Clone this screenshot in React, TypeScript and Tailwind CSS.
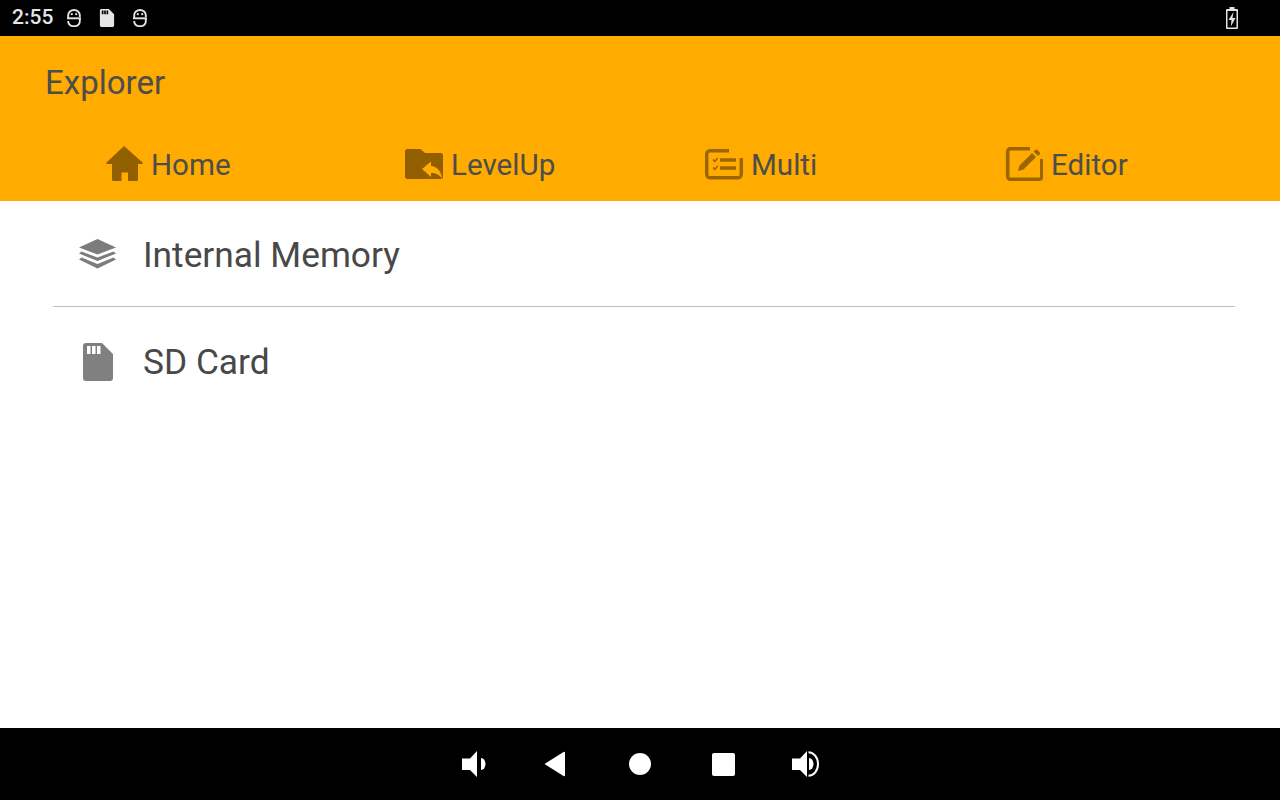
const tabIcon = "h-[38px] w-[38px] shrink-0";

function AdbIcon() {
  return (
    <svg viewBox="0 0 16 18" className="h-[18px] w-4 text-[#e4e4e4]" fill="none" stroke="currentColor" strokeWidth="1.9">
      <path d="M2.200 9V6.200a5.800 5.200 0 0 1 11.600 0V8" />
      <path d="M1 9.300h14" />
      <path d="M13.800 9.500v3a5.800 4.800 0 0 1-11.600 0V12" />
      <circle cx="5.800" cy="5.200" r="1.100" fill="currentColor" stroke="none" />
      <circle cx="10.200" cy="5.200" r="1.100" fill="currentColor" stroke="none" />
    </svg>
  );
}

function SdIcon({ className }: { className: string }) {
  return (
    <svg viewBox="0 0 30 38" className={className}>
      <path
        fillRule="evenodd"
        fill="currentColor"
        d="M3 0h16L30 11v24a3 3 0 0 1-3 3H3a3 3 0 0 1-3-3V3a3 3 0 0 1 3-3zM4 3v8h3.500V3zM9 3v8h3.500V3zM14 3v8h3.500V3z"
      />
    </svg>
  );
}

function VolumeDown() {
  return (
    <svg viewBox="0 0 26 26" className="h-[26px] w-[26px]">
      <path fill="currentColor" d="M1 7.500h8L16 0v26l-7-7H1z" />
      <path fill="currentColor" d="M20 7a4.500 6 0 0 1 0 12z" />
    </svg>
  );
}

function VolumeUp() {
  return (
    <svg viewBox="0 0 28 26" className="h-[26px] w-[28px]">
      <path fill="currentColor" d="M0 7.500h8L15 0v26l-7-7H0z" />
      <path fill="currentColor" d="M17 7a4.500 6 0 0 1 0 12z" />
      <path fill="none" stroke="currentColor" strokeWidth="2" d="M16.500 1.200a9.500 11.800 0 0 1 0 23.600" />
    </svg>
  );
}

function Tab({ icon, label }: { icon: React.ReactNode; label: string }) {
  return (
    <div className="flex items-center gap-[8px]">
      {icon}
      <span className="mt-[1px] text-[29.6px] leading-[38px] text-[#4d4d4d]">{label}</span>
    </div>
  );
}

export default function App() {
  return (
    <div className="flex h-[800px] w-[1280px] flex-col overflow-hidden bg-white font-['Roboto',sans-serif]">
      {/* status bar */}
      <div className="flex h-9 items-center justify-between bg-black pl-3 pr-[42px]">
        <div className="flex items-center">
          <span className="w-[54px] text-[21px] font-medium text-[#e4e4e4]">2:55</span>
          <div className="flex items-center gap-[17px]">
            <AdbIcon />
            <SdIcon className="h-[18px] w-[16px] text-[#e4e4e4]" />
            <AdbIcon />
          </div>
        </div>
        <svg viewBox="0 0 12 22" className="h-[22px] w-3">
          <path fill="#e4e4e4" d="M3.500 0h5v2h2.500a1 1 0 0 1 1 1v18a1 1 0 0 1-1 1H1a1 1 0 0 1-1-1V3a1 1 0 0 1 1-1h2.500z" />
          <path d="M1.500 4h9v16.500h-9z" fill="#000" />
          <path d="M7.500 5 2.500 13h3L4.800 19.500 9.500 11H6.500z" fill="#e4e4e4" />
        </svg>
      </div>

      {/* toolbar + tabs */}
      <div className="h-[165px] bg-[#ffab00]">
        <div className="pl-[45px] pt-[27px] text-[33px] leading-[40px] text-[#4d4d4d]">Explorer</div>
        <div className="mt-[42px] grid grid-cols-[repeat(4,300px)] pl-[105px]">
          <Tab
            label="Home"
            icon={
              <svg viewBox="0 0 38 38" className={`${tabIcon} text-[#915f00]`}>
                <path fill="currentColor" d="M19 0 37.500 16.500c.6 1-.1 1.500-1 1.500H33V33.500A1.500 1.500 0 0 1 31.500 35H23V26.500H16.500V35H8.500A1.500 1.500 0 0 1 7 33.500V18H2.500c-1 0-1.600-.6-1-1.500z" />
              </svg>
            }
          />
          <Tab
            label="LevelUp"
            icon={
              <svg viewBox="0 0 38 38" className={`${tabIcon} text-[#915f00]`}>
                <path fill="currentColor" d="M2.500 3h13l4.500 4h15.500A2.500 2.500 0 0 1 38 9.500V30.500A2.500 2.500 0 0 1 35.500 33H2.500A2.500 2.500 0 0 1 0 30.500V5.500A2.500 2.500 0 0 1 2.500 3z" />
                <path fill="#ffab00" d="M17 23 26 15.500v4.500c5.500.5 10 4 11 12.500-3-4-6-5.500-11-5.500v4z" />
              </svg>
            }
          />
          <Tab
            label="Multi"
            icon={
              <svg viewBox="0 0 38 38" className={`${tabIcon} text-[#9c6500]`} fill="none" stroke="currentColor">
                <path strokeWidth="3.400" d="M24 4.700H5A3.400 3.400 0 0 0 1.700 8V28.500A3.400 3.400 0 0 0 5 31.800h28a3.400 3.400 0 0 0 3.300-3.300V12" />
                <path strokeWidth="3.400" d="M15 14h16M15 22h16" />
                <path strokeWidth="1.500" d="M8 13.500l1.800 1.800 3-3.300M8 21.500l1.800 1.800 3-3.300" />
              </svg>
            }
          />
          <Tab
            label="Editor"
            icon={
              <svg viewBox="0 0 38 38" className={`${tabIcon} text-[#9c6500]`} fill="none">
                <path stroke="currentColor" strokeWidth="3.600" d="M25 2.700H5.500A2.800 2.800 0 0 0 2.700 5.500V30.500a2.800 2.800 0 0 0 2.800 2.800h28.500a2.800 2.800 0 0 0 2.800-2.800V13" />
                <path fill="currentColor" d="M13 25l1.500-5.500L27 7l4 4L18.500 23.500zM28.500 5.500l1.500-1.500a1.800 1.800 0 0 1 2.500 0l2 2a1.800 1.800 0 0 1 0 2.500L33 10z" />
              </svg>
            }
          />
        </div>
      </div>

      {/* storage list */}
      <div className="flex-1">
        <div className="flex h-[105px] items-center pl-[79px]">
          <svg viewBox="0 0 37 30" className="h-[30px] w-[37px] text-[#7c7c7c]">
            <path fill="currentColor" d="M18.500 0 37 8.500 18.500 15.500 0 8.500z" />
            <path fill="currentColor" d="M2.500 12.500 18.500 18.500 34.500 12.500 37 14.500 18.500 22 0 14.500zM2.500 18.500 18.500 25 34.500 18.500 37 20.500 18.500 29.500 0 20.500z" />
          </svg>
          <span className="ml-[27px] mt-[4px] text-[35.3px] text-[#484848]">Internal Memory</span>
        </div>
        <div className="mx-[53px] h-px w-[1182px] bg-[#bdbdbd]" />
        <div className="flex h-[110px] items-center pl-[83px]">
          <SdIcon className="h-[38px] w-[30px] text-[#808080]" />
          <span className="ml-[30px] mt-[1px] text-[35.3px] text-[#484848]">SD Card</span>
        </div>
      </div>

      {/* nav bar */}
      <div className="flex h-[72px] items-center justify-center bg-black text-white">
        <div className="flex w-[83px] justify-center"><VolumeDown /></div>
        <div className="flex w-[83px] justify-center pr-[5px]">
          <svg viewBox="0 0 24 26" className="h-[26px] w-[24px]">
            <path fill="currentColor" d="M1.500 13 20.500 1a1 1 0 0 1 1.500 1v22a1 1 0 0 1-1.500 1z" />
          </svg>
        </div>
        <div className="flex w-[83px] justify-center"><div className="h-[22px] w-[22px] rounded-full bg-white" /></div>
        <div className="flex w-[83px] justify-center"><div className="h-[23px] w-[23px] rounded-[2px] bg-white" /></div>
        <div className="flex w-[83px] justify-center"><VolumeUp /></div>
      </div>
    </div>
  );
}
